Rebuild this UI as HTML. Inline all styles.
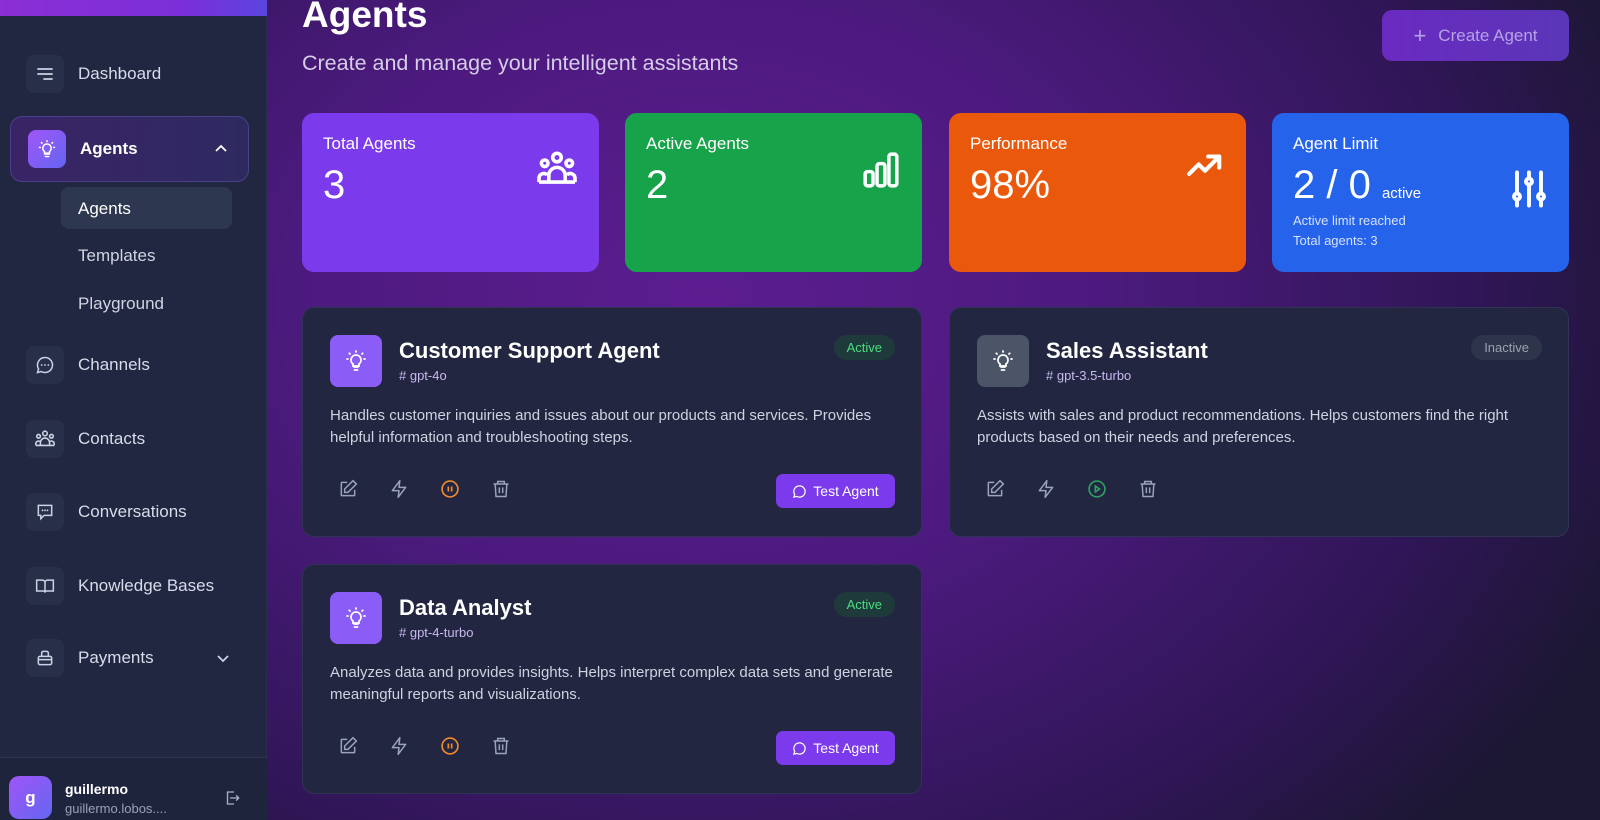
<!DOCTYPE html>
<html><head><meta charset="utf-8"><style>
*{box-sizing:border-box;margin:0;padding:0}
body{width:1600px;height:820px;overflow:hidden;font-family:"Liberation Sans",sans-serif;position:relative;
background:radial-gradient(ellipse 1000px 760px at 700px 300px,#5c1d90 0%,#4c1a7e 40%,#2f1656 78%,#1c1733 100%);}
.sb{position:absolute;left:0;top:0;width:267px;height:820px;background:#212641;border-right:1px solid #2a2f4c}
.topbar{position:absolute;left:0;top:0;width:267px;height:16px;background:linear-gradient(90deg,#8b2fd6,#7b2fd8 70%,#5a45e0)}
.it{position:absolute;left:26px;display:flex;align-items:center;color:#d8dcea;font-size:17px}
.ib{width:38px;height:38px;border-radius:8px;background:#283049;display:flex;align-items:center;justify-content:center;margin-right:14px}
.grp{position:absolute;left:10px;top:116px;width:239px;height:66px;border-radius:12px;border:1px solid #4a3f8a;background:linear-gradient(90deg,#3a2466,#2e2a60)}
.sub{position:absolute;left:78px;color:#d0d4e2;font-size:17px}
.stat{position:absolute;top:113px;width:297px;height:159px;border-radius:12px;color:#fff;padding:24px 21px}
.stat .l{font-size:17px;margin-top:-3px}
.stat .v{font-size:40px;margin-top:9px;line-height:44px}
.stat svg{position:absolute;right:22px;top:38px}
.card{position:absolute;width:620px;height:230px;border-radius:12px;background:#222640;border:1px solid #2f3452}
.av{position:absolute;left:27px;top:27px;width:52px;height:52px;border-radius:8px;display:flex;align-items:center;justify-content:center}
.ct{position:absolute;left:96px;top:30px;color:#fff;font-size:22px;font-weight:bold}
.cm{position:absolute;left:96px;top:60px;color:#c8b8f0;font-size:13px}
.badge{position:absolute;right:26px;top:27px;height:25px;padding:0 13px;border-radius:13px;font-size:13px;line-height:25px}
.ds{position:absolute;left:27px;top:97px;width:575px;color:#cdd3e0;font-size:15px;line-height:21.5px}
.acts{position:absolute;left:35px;top:171px;display:flex;gap:31px}
.btn{position:absolute;right:26px;top:166px;width:119px;height:34px;border-radius:7px;background:#7c3aed;color:#fff;font-size:14px;display:flex;align-items:center;justify-content:center;gap:6px}
</style></head><body>
<div class="sb">
<div class="topbar"></div>
<div class="it" style="top:55px"><div class="ib"><svg width="20" height="20" viewBox="0 0 20 20" fill="none" stroke="#cbd2e4" stroke-width="1.8" stroke-linecap="round"><path d="M3 5h14M3 10h14M9 15h8"/></svg></div>Dashboard</div>
<div class="grp"></div>
<div class="it" style="top:130px;left:28px;color:#fff;font-weight:bold"><div class="ib" style="background:linear-gradient(135deg,#a155f7,#6366f1);width:38px;height:38px"><svg width="20" height="20" viewBox="0 0 24 24" fill="none" stroke="#fff" stroke-width="1.8" stroke-linecap="round"><path d="M9 18h6M10 21h4M12 6a5 5 0 0 0-3 9v2h6v-2a5 5 0 0 0-3-9zM12 2v1M4 10H3M21 10h-1M6 5l-.7-.7M18 5l.7-.7"/></svg></div>Agents</div>
<svg style="position:absolute;left:214px;top:143px" width="14" height="10" viewBox="0 0 14 10" fill="none" stroke="#fff" stroke-width="1.8"><path d="M2 8l5-5 5 5"/></svg>
<div style="position:absolute;left:61px;top:187px;width:171px;height:42px;border-radius:8px;background:#2e3750"></div>
<div class="sub" style="top:199px;color:#fff">Agents</div>
<div class="sub" style="top:246px">Templates</div>
<div class="sub" style="top:294px">Playground</div>
<div class="it" style="top:346px"><div class="ib"><svg width="20" height="20" viewBox="0 0 24 24" fill="none" stroke="#cbd2e4" stroke-width="1.8"><path d="M12 3a9 9 0 1 1-4.5 16.8L3 21l1.3-4.3A9 9 0 0 1 12 3z"/><path d="M8 12h.01M12 12h.01M16 12h.01" stroke-linecap="round" stroke-width="2.2"/></svg></div>Channels</div>
<div class="it" style="top:420px"><div class="ib"><svg width="22" height="22" viewBox="0 0 24 24" fill="none" stroke="#cbd2e4" stroke-width="1.7"><circle cx="12" cy="6" r="2.5"/><circle cx="5" cy="9" r="2"/><circle cx="19" cy="9" r="2"/><path d="M7 19v-3a5 5 0 0 1 10 0v3zM2 19v-2a3 3 0 0 1 5-2M22 19v-2a3 3 0 0 0-5-2M2 19h20"/></svg></div>Contacts</div>
<div class="it" style="top:493px"><div class="ib"><svg width="20" height="20" viewBox="0 0 24 24" fill="none" stroke="#cbd2e4" stroke-width="1.8"><path d="M4 4h16v12H11l-4 4v-4H4z"/><path d="M9 10h.01M12 10h.01M15 10h.01" stroke-linecap="round" stroke-width="2.2"/></svg></div>Conversations</div>
<div class="it" style="top:567px"><div class="ib"><svg width="20" height="20" viewBox="0 0 24 24" fill="none" stroke="#cbd2e4" stroke-width="1.8"><path d="M2 5h7a3 3 0 0 1 3 3v12a2 2 0 0 0-2-2H2zM22 5h-7a3 3 0 0 0-3 3v12a2 2 0 0 1 2-2h8z"/></svg></div>Knowledge Bases</div>
<div class="it" style="top:639px"><div class="ib"><svg width="20" height="20" viewBox="0 0 24 24" fill="none" stroke="#cbd2e4" stroke-width="1.8"><rect x="4" y="10" width="16" height="10" rx="2"/><path d="M4 14h16M8 10V6a2 2 0 0 1 2-2h4a2 2 0 0 1 2 2v4"/></svg></div>Payments</div>
<svg style="position:absolute;left:216px;top:654px" width="14" height="10" viewBox="0 0 14 10" fill="none" stroke="#cbd2e4" stroke-width="1.8"><path d="M2 2l5 5 5-5"/></svg>
<div style="position:absolute;left:0;top:757px;width:267px;height:63px;border-top:1px solid #2e3450;background:#1f243d"></div>
<div style="position:absolute;left:9px;top:776px;width:43px;height:43px;border-radius:10px;background:linear-gradient(135deg,#a155f7,#6366f1);color:#fff;font-weight:bold;font-size:17px;display:flex;align-items:center;justify-content:center">g</div>
<div style="position:absolute;left:65px;top:781px;color:#fff;font-weight:bold;font-size:14px">guillermo</div>
<div style="position:absolute;left:65px;top:801px;color:#9aa1b8;font-size:13px">guillermo.lobos....</div>
<svg style="position:absolute;left:223px;top:789px" width="18" height="18" viewBox="0 0 24 24" fill="none" stroke="#aab0c4" stroke-width="1.8" stroke-linecap="round"><path d="M14 4H6v16h8M10 12h11M18 9l3 3-3 3"/></svg>
</div>
<div style="position:absolute;left:302px;top:-6px;color:#fff;font-size:37px;font-weight:bold">Agents</div>
<div style="position:absolute;left:302px;top:51px;color:#d6cde8;font-size:21.5px">Create and manage your intelligent assistants</div>
<div style="position:absolute;left:1382px;top:10px;width:187px;height:51px;border-radius:10px;background:linear-gradient(90deg,#6a2ac0,#5a36b8);color:#b7a2e6;font-size:17px;display:flex;align-items:center;justify-content:center;gap:12px"><span style="font-size:22px">+</span>Create Agent</div>

<div class="stat" style="left:302px;background:#7c3aed"><div class="l">Total Agents</div><div class="v">3</div>
<svg width="40" height="36" viewBox="0 0 24 22" fill="none" stroke="#fff" stroke-width="2.2"><circle cx="12" cy="4" r="2.6"/><circle cx="4.5" cy="7.5" r="2"/><circle cx="19.5" cy="7.5" r="2"/><path d="M7 19v-4a5 5 0 0 1 10 0v4zM1 19v-2.5a3 3 0 0 1 5-2M23 19v-2.5a3 3 0 0 0-5-2M1 19h22"/></svg></div>
<div class="stat" style="left:625px;background:#16a34a"><div class="l">Active Agents</div><div class="v">2</div>
<svg width="38" height="38" viewBox="0 0 24 24" fill="none" stroke="#fff" stroke-width="2.2"><rect x="2" y="13" width="5" height="9" rx="1.5"/><rect x="9.5" y="8" width="5" height="14" rx="1.5"/><rect x="17" y="2" width="5" height="20" rx="1.5"/></svg></div>
<div class="stat" style="left:949px;background:#ea580c"><div class="l">Performance</div><div class="v">98%</div>
<svg width="38" height="30" viewBox="0 0 24 18" fill="none" stroke="#fff" stroke-width="2.6" stroke-linecap="round" stroke-linejoin="round"><path d="M2 14l6-6 4 4 9-9M14 3h7v7"/></svg></div>
<div class="stat" style="left:1272px;background:#2563eb"><div class="l">Agent Limit</div><div class="v">2 / 0 <span style="font-size:15px">active</span></div>
<div style="font-size:13px;color:#d6e2ff;margin-top:-3px">Active limit reached</div><div style="font-size:13px;color:#d6e2ff;margin-top:5px">Total agents: 3</div>
<svg width="36" height="40" viewBox="0 0 24 26" fill="none" stroke="#fff" stroke-width="2.6" stroke-linecap="round" style="top:56px"><path d="M4 2v14M4 20v4M12 2v4M12 10v14M20 2v14M20 20v4"/><circle cx="4" cy="18" r="2"/><circle cx="12" cy="8" r="2"/><circle cx="20" cy="18" r="2"/></svg></div>

<div class="card" style="left:302px;top:307px">
<div class="av" style="background:#8b5cf6"><svg width="24" height="24" viewBox="0 0 24 24" fill="none" stroke="#fff" stroke-width="1.8" stroke-linecap="round"><path d="M10 18h4M10.5 21h3M12 6a5 5 0 0 0-3 9v2h6v-2a5 5 0 0 0-3-9zM12 2v1M4 10H3M21 10h-1M6 5l-.7-.7M18 5l.7-.7"/></svg></div>
<div class="ct">Customer Support Agent</div><div class="cm"># gpt-4o</div>
<div class="badge" style="background:#1f3a3a;color:#4ade80">Active</div>
<div class="ds">Handles customer inquiries and issues about our products and services. Provides helpful information and troubleshooting steps.</div>
<div class="acts">
<svg width="20" height="20" viewBox="0 0 24 24" fill="none" stroke="#9aa3b8" stroke-width="1.8"><path d="M11 4H5a1 1 0 0 0-1 1v14a1 1 0 0 0 1 1h14a1 1 0 0 0 1-1v-6"/><path d="M18 2l4 4-10 10H8v-4z"/></svg>
<svg width="20" height="20" viewBox="0 0 24 24" fill="none" stroke="#9aa3b8" stroke-width="1.8" stroke-linejoin="round"><path d="M13 2L4 14h8l-1 8 9-12h-8z"/></svg>
<svg width="20" height="20" viewBox="0 0 24 24" fill="none" stroke="#f08a2c" stroke-width="2"><circle cx="12" cy="12" r="9.5"/><path d="M10 9v6M14 9v6"/></svg>
<svg width="20" height="20" viewBox="0 0 24 24" fill="none" stroke="#9aa3b8" stroke-width="1.8"><path d="M3 6h18M8 6V3h8v3M5 6l1 15h12l1-15M10 10v7M14 10v7"/></svg>
</div>
<div class="btn"><svg width="15" height="15" viewBox="0 0 24 24" fill="none" stroke="#fff" stroke-width="2"><path d="M12 3a9 9 0 1 1-4.5 16.8L3 21l1.3-4.3A9 9 0 0 1 12 3z"/></svg>Test Agent</div>
</div>

<div class="card" style="left:949px;top:307px">
<div class="av" style="background:#4b5567"><svg width="24" height="24" viewBox="0 0 24 24" fill="none" stroke="#fff" stroke-width="1.8" stroke-linecap="round"><path d="M10 18h4M10.5 21h3M12 6a5 5 0 0 0-3 9v2h6v-2a5 5 0 0 0-3-9zM12 2v1M4 10H3M21 10h-1M6 5l-.7-.7M18 5l.7-.7"/></svg></div>
<div class="ct">Sales Assistant</div><div class="cm"># gpt-3.5-turbo</div>
<div class="badge" style="background:#2e3449;color:#9aa1b4">Inactive</div>
<div class="ds">Assists with sales and product recommendations. Helps customers find the right products based on their needs and preferences.</div>
<div class="acts">
<svg width="20" height="20" viewBox="0 0 24 24" fill="none" stroke="#9aa3b8" stroke-width="1.8"><path d="M11 4H5a1 1 0 0 0-1 1v14a1 1 0 0 0 1 1h14a1 1 0 0 0 1-1v-6"/><path d="M18 2l4 4-10 10H8v-4z"/></svg>
<svg width="20" height="20" viewBox="0 0 24 24" fill="none" stroke="#9aa3b8" stroke-width="1.8" stroke-linejoin="round"><path d="M13 2L4 14h8l-1 8 9-12h-8z"/></svg>
<svg width="20" height="20" viewBox="0 0 24 24" fill="none" stroke="#2f9e63" stroke-width="2"><circle cx="12" cy="12" r="9.5"/><path d="M10 8.5l5 3.5-5 3.5z"/></svg>
<svg width="20" height="20" viewBox="0 0 24 24" fill="none" stroke="#9aa3b8" stroke-width="1.8"><path d="M3 6h18M8 6V3h8v3M5 6l1 15h12l1-15M10 10v7M14 10v7"/></svg>
</div>
</div>

<div class="card" style="left:302px;top:564px">
<div class="av" style="background:#8b5cf6"><svg width="24" height="24" viewBox="0 0 24 24" fill="none" stroke="#fff" stroke-width="1.8" stroke-linecap="round"><path d="M10 18h4M10.5 21h3M12 6a5 5 0 0 0-3 9v2h6v-2a5 5 0 0 0-3-9zM12 2v1M4 10H3M21 10h-1M6 5l-.7-.7M18 5l.7-.7"/></svg></div>
<div class="ct">Data Analyst</div><div class="cm"># gpt-4-turbo</div>
<div class="badge" style="background:#1f3a3a;color:#4ade80">Active</div>
<div class="ds">Analyzes data and provides insights. Helps interpret complex data sets and generate meaningful reports and visualizations.</div>
<div class="acts">
<svg width="20" height="20" viewBox="0 0 24 24" fill="none" stroke="#9aa3b8" stroke-width="1.8"><path d="M11 4H5a1 1 0 0 0-1 1v14a1 1 0 0 0 1 1h14a1 1 0 0 0 1-1v-6"/><path d="M18 2l4 4-10 10H8v-4z"/></svg>
<svg width="20" height="20" viewBox="0 0 24 24" fill="none" stroke="#9aa3b8" stroke-width="1.8" stroke-linejoin="round"><path d="M13 2L4 14h8l-1 8 9-12h-8z"/></svg>
<svg width="20" height="20" viewBox="0 0 24 24" fill="none" stroke="#f08a2c" stroke-width="2"><circle cx="12" cy="12" r="9.5"/><path d="M10 9v6M14 9v6"/></svg>
<svg width="20" height="20" viewBox="0 0 24 24" fill="none" stroke="#9aa3b8" stroke-width="1.8"><path d="M3 6h18M8 6V3h8v3M5 6l1 15h12l1-15M10 10v7M14 10v7"/></svg>
</div>
<div class="btn"><svg width="15" height="15" viewBox="0 0 24 24" fill="none" stroke="#fff" stroke-width="2"><path d="M12 3a9 9 0 1 1-4.5 16.8L3 21l1.3-4.3A9 9 0 0 1 12 3z"/></svg>Test Agent</div>
</div>
</body></html>
